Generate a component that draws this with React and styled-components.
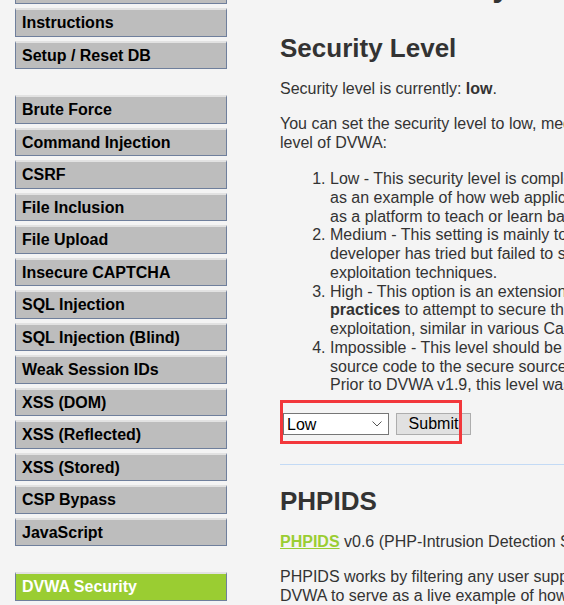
import React from 'react';
import styled, { createGlobalStyle } from 'styled-components';

const menuGroups = [
  [{ label: 'Home' }, { label: 'Instructions' }, { label: 'Setup / Reset DB' }],
  [
    { label: 'Brute Force' },
    { label: 'Command Injection' },
    { label: 'CSRF' },
    { label: 'File Inclusion' },
    { label: 'File Upload' },
    { label: 'Insecure CAPTCHA' },
    { label: 'SQL Injection' },
    { label: 'SQL Injection (Blind)' },
    { label: 'Weak Session IDs' },
    { label: 'XSS (DOM)' },
    { label: 'XSS (Reflected)' },
    { label: 'XSS (Stored)' },
    { label: 'CSP Bypass' },
    { label: 'JavaScript' },
  ],
  [{ label: 'DVWA Security', active: true }, { label: 'PHP Info' }, { label: 'About' }],
];

const App = () => (
  <>
    <GlobalStyle />
    <StyledPage>
      <StyledSidebar>
        {menuGroups.map((group, i) => (
          <StyledMenuGroup key={i}>
            {group.map(item => (
              <StyledMenuItem key={item.label}>
                <StyledMenuLink href="#" $active={item.active}>
                  {item.label}
                </StyledMenuLink>
              </StyledMenuItem>
            ))}
          </StyledMenuGroup>
        ))}
      </StyledSidebar>

      <StyledMain>
        <StyledPageTitle>DVWA Security</StyledPageTitle>
        <StyledSectionTitle>Security Level</StyledSectionTitle>
        <StyledText>
          Security level is currently: <b>low</b>.
        </StyledText>
        <StyledText>
          You can set the security level to low, medium, high or impossible. The security level changes the vulnerability
          <br />
          level of DVWA:
        </StyledText>
        <StyledLevels>
          <li>
            Low - This security level is completely vulnerable and has no security measures at all. It's use is to be
            <br />
            as an example of how web application vulnerabilities manifest through bad coding practices and to serve
            <br />
            as a platform to teach or learn basic exploitation techniques.
          </li>
          <li>
            Medium - This setting is mainly to give an example to the user of bad security practices, where the
            <br />
            developer has tried but failed to secure an application. It also acts as a challenge to users to refine their
            <br />
            exploitation techniques.
          </li>
          <li>
            High - This option is an extension to the medium difficulty, with a mixture of <b>harder or alternative bad</b>
            <br />
            <b>practices</b> to attempt to secure the code. The vulnerability may not allow the same extent of the
            <br />
            exploitation, similar in various Capture The Flags (CTFs) competitions.
          </li>
          <li>
            Impossible - This level should be secure against all vulnerabilities. It is used to compare the vulnerable
            <br />
            source code to the secure source code.
            <br />
            Prior to DVWA v1.9, this level was known as 'high'.
          </li>
        </StyledLevels>

        <StyledForm onSubmit={e => e.preventDefault()}>
          <StyledSelectWrap>
            <StyledSelect defaultValue="low">
              <option value="low">Low</option>
              <option value="medium">Medium</option>
              <option value="high">High</option>
              <option value="impossible">Impossible</option>
            </StyledSelect>
            <StyledChevron viewBox="0 0 10 6" aria-hidden="true">
              <path d="M0.5 0.5 L5 5 L9.5 0.5" />
            </StyledChevron>
          </StyledSelectWrap>
          <StyledSubmit type="submit">Submit</StyledSubmit>
          {/* red annotation box from the screenshot */}
          <StyledHighlight />
        </StyledForm>

        <StyledDivider />

        <StyledSectionTitle>PHPIDS</StyledSectionTitle>
        <StyledText>
          <StyledLink href="#">PHPIDS</StyledLink> v0.6 (PHP-Intrusion Detection System) is a security layer for PHP based web applications.
        </StyledText>
        <StyledText>
          PHPIDS works by filtering any user supplied input against a blacklist of potentially malicious code. It is used in
          <br />
          DVWA to serve as a live example of how Web Application Firewalls (WAFs) can help improve security and in some
        </StyledText>
      </StyledMain>
    </StyledPage>
  </>
);

const GlobalStyle = createGlobalStyle`
  html, body {
    margin: 0;
    padding: 0;
    overflow: hidden;
    background: #f4f4f4;
  }

  body {
    font-family: "Liberation Sans", Arial, sans-serif;
    font-size: 16px;
    color: #333;
  }
`;

const StyledPage = styled.div`
  display: flex;
  align-items: flex-start;
  width: 1300px;
  margin-top: -40px;
`;

const StyledSidebar = styled.nav`
  flex: 0 0 212px;
  margin-left: 15px;
  padding-top: 15.5px;
`;

const StyledMenuGroup = styled.ul`
  display: flex;
  flex-direction: column;
  gap: 4px;
  margin: 0 0 26px;
  padding: 0;
  list-style: none;
`;

const StyledMenuItem = styled.li`
  margin: 0;
`;

const StyledMenuLink = styled.a`
  display: block;
  box-sizing: border-box;
  height: 28.5px;
  padding-left: 6px;
  border: 1px solid #6f7f9c;
  border-top: 2px solid #e2e2e2;
  background: ${({ $active }) => ($active ? '#9acd32' : '#bdbdbd')};
  color: ${({ $active }) => ($active ? '#fff' : '#000')};
  font-size: 16px;
  font-weight: bold;
  line-height: 25.5px;
  text-decoration: none;
  white-space: nowrap;
`;

const StyledMain = styled.main`
  flex: 0 0 960px;
  margin-left: 53px;
  padding-top: 6.4px;
  white-space: nowrap;
  color: #333;
`;

const StyledPageTitle = styled.h1`
  margin: 0 0 28.6px;
  font-size: 32px;
  line-height: 38px;
  color: #333;
`;

const StyledSectionTitle = styled.h2`
  margin: 0;
  font-size: 26px;
  line-height: 30px;
  color: #333;
`;

const StyledText = styled.p`
  margin: 16.6px 0;
  line-height: 18.75px;
`;

const StyledLevels = styled.ol`
  margin: 17.8px 0;
  padding-left: 50px;
  line-height: 18.75px;
`;

const StyledForm = styled.form`
  position: relative;
  display: flex;
  align-items: center;
  gap: 7px;
  margin: 18px 0 28.7px;
`;

const StyledSelectWrap = styled.div`
  position: relative;
  margin-left: 3px;
`;

const StyledSelect = styled.select`
  display: block;
  box-sizing: border-box;
  width: 106px;
  height: 22px;
  padding: 0 0 0 3px;
  border: 1px solid #767676;
  border-radius: 0;
  background: #fff;
  color: #000;
  font-family: "Liberation Sans", Arial, sans-serif;
  font-size: 16px;
  appearance: none;
  outline: none;
`;

const StyledChevron = styled.svg`
  position: absolute;
  top: 8px;
  right: 7px;
  width: 10px;
  height: 6px;
  fill: none;
  stroke: #555;
  stroke-width: 1;
  pointer-events: none;
`;

const StyledSubmit = styled.button`
  box-sizing: border-box;
  width: 75px;
  height: 22px;
  padding: 0;
  border: 1px solid #adadad;
  border-radius: 0;
  background: #e1e1e1;
  color: #000;
  font-family: "Liberation Sans", Arial, sans-serif;
  font-size: 16px;
  line-height: 20px;
  cursor: pointer;
`;

const StyledHighlight = styled.div`
  position: absolute;
  left: 0;
  top: -13px;
  width: 182px;
  height: 44px;
  box-sizing: border-box;
  border: 3px solid #f2373b;
  pointer-events: none;
`;

const StyledDivider = styled.hr`
  margin: 0 0 21px;
  border: 0;
  border-top: 1px solid #c3daf5;
`;

const StyledLink = styled.a`
  color: #9acd32;
  font-weight: bold;
  text-decoration: underline;
`;

export default App;
